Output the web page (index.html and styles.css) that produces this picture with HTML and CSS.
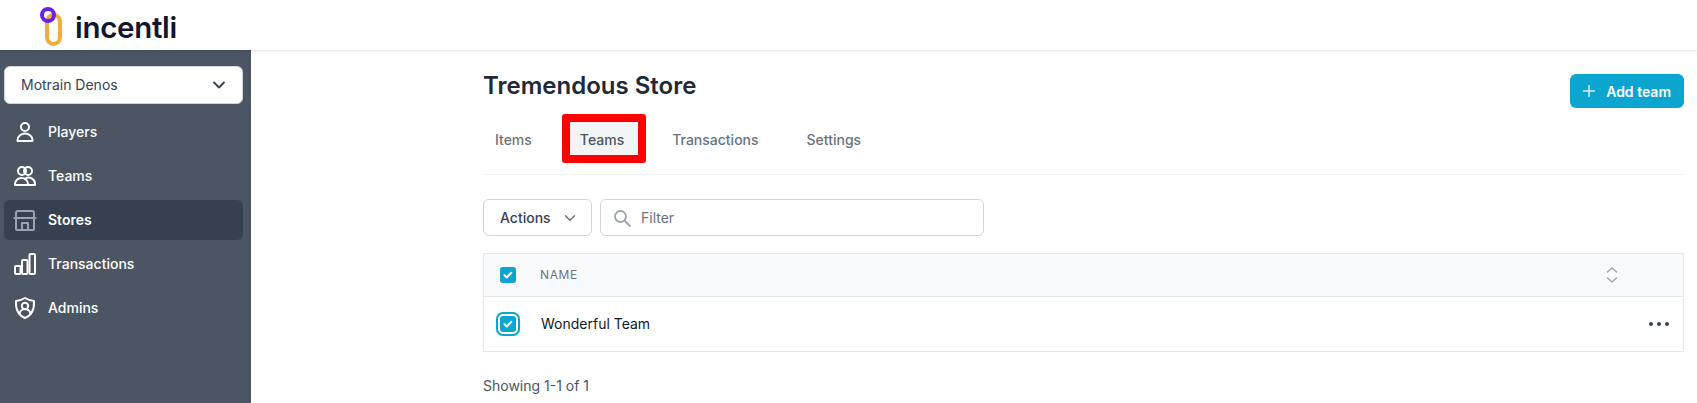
FILE: index.html
```html
<!DOCTYPE html>
<html lang="en">
<head>
  <meta charset="UTF-8" />
  <meta name="viewport" content="width=device-width, initial-scale=1.0"/>
  <title>Tremendous Store</title>
  <link rel="stylesheet" href="styles.css">
</head>
<body>
  <header class="topbar">
    <svg class="logo-mark" width="30" height="48" viewBox="0 0 30 48" fill="none">
      <rect x="7" y="14" width="13" height="29" rx="6.500" stroke="#f0ad3c" stroke-width="4"/>
      <circle cx="8" cy="14" r="6" stroke="#6a22e6" stroke-width="4"/>
    </svg>
    <span class="logo-text">incentli</span>
  </header>

  <div class="layout">
    <aside class="sidebar">
      <div class="org-select">
        <span>Motrain Denos</span>
        <svg width="20" height="20" viewBox="0 0 24 24" fill="none" stroke="#374151" stroke-width="2.200" stroke-linecap="round" stroke-linejoin="round"><path d="M6 9l6 6 6-6"/></svg>
      </div>
      <nav class="nav">
        <a class="nav-item">
          <svg width="24" height="24" viewBox="0 0 24 24" fill="none" stroke="currentColor" stroke-width="2" stroke-linecap="round" stroke-linejoin="round"><circle cx="12" cy="7" r="4"/><path d="M4.500 21v-1a7.500 6.500 0 0 1 15 0v1z"/></svg>
          <span>Players</span>
        </a>
        <a class="nav-item">
          <svg width="24" height="24" viewBox="0 0 24 24" fill="none" stroke="currentColor" stroke-width="2" stroke-linecap="round" stroke-linejoin="round"><circle cx="9" cy="7" r="4"/><circle cx="15" cy="7" r="4"/><path d="M2 21v-1a6.500 6 0 0 1 13 0v1z"/><path d="M12.500 14.300a6.500 6 0 0 1 9.500 5.700v1h-7"/></svg>
          <span>Teams</span>
        </a>
        <a class="nav-item active">
          <svg width="24" height="24" viewBox="0 0 24 24" fill="none" stroke="#9ca3af" stroke-width="2" stroke-linecap="round" stroke-linejoin="round"><path d="M3 10V5a2 2 0 0 1 2-2h14a2 2 0 0 1 2 2v5"/><path d="M1.500 10h21"/><path d="M3 10v11a1 1 0 0 0 1 1h16a1 1 0 0 0 1-1V10"/><path d="M9 22v-7h6v7"/></svg>
          <span>Stores</span>
        </a>
        <a class="nav-item">
          <svg width="24" height="24" viewBox="0 0 24 24" fill="none" stroke="currentColor" stroke-width="2" stroke-linecap="round" stroke-linejoin="round"><rect x="2" y="14" width="5.500" height="8" rx="1"/><rect x="9" y="8" width="5.500" height="14" rx="1"/><rect x="16.500" y="2" width="5.500" height="20" rx="1"/></svg>
          <span>Transactions</span>
        </a>
        <a class="nav-item">
          <svg width="24" height="24" viewBox="0 0 24 24" fill="none" stroke="currentColor" stroke-width="2" stroke-linecap="round" stroke-linejoin="round"><path d="M12 2c3 1.800 6 2.800 9 3 .5 8-2 14-9 17C5 19 2.500 13 3 5c3-.2 6-1.200 9-3z"/><circle cx="12" cy="10" r="3.200"/><path d="M6.500 18a5.500 5 0 0 1 11 0"/></svg>
          <span>Admins</span>
        </a>
      </nav>
    </aside>

    <main class="content">
      <div class="page-head">
        <h1>Tremendous Store</h1>
        <button class="btn-add">
          <svg width="16" height="16" viewBox="0 0 16 16" fill="none" stroke="#d8f1f8" stroke-width="1.500" stroke-linecap="round"><path d="M8 2.500v11M2.500 8h11"/></svg>
          Add team
        </button>
      </div>

      <div class="tabs">
        <a class="tab">Items</a>
        <a class="tab current">Teams</a>
        <a class="tab">Transactions</a>
        <a class="tab">Settings</a>
      </div>

      <div class="toolbar">
        <button class="btn-actions">
          Actions
          <svg width="18" height="18" viewBox="0 0 24 24" fill="none" stroke="#6b7280" stroke-width="2" stroke-linecap="round" stroke-linejoin="round"><path d="M6 9l6 6 6-6"/></svg>
        </button>
        <div class="filter">
          <svg width="20" height="20" viewBox="0 0 20 20" fill="none" stroke="#9ca3af" stroke-width="1.800" stroke-linecap="round"><circle cx="8.500" cy="8.500" r="5.500"/><path d="M12.700 12.700L18 18"/></svg>
          <span>Filter</span>
        </div>
      </div>

      <div class="table">
        <div class="table-head">
          <span class="check">
            <svg width="16" height="16" viewBox="0 0 16 16" fill="none" stroke="#fff" stroke-width="2" stroke-linecap="round" stroke-linejoin="round"><path d="M4.500 8.300l2.300 2.200 4.500-4.800"/></svg>
          </span>
          <span class="col-name">NAME</span>
          <svg class="sort" width="14" height="20" viewBox="0 0 14 20" fill="none" stroke="#9ca3af" stroke-width="1.300" stroke-linecap="round" stroke-linejoin="round"><path d="M2.500 7L7 3l4.500 4"/><path d="M2.500 13L7 17l4.500-4"/></svg>
        </div>
        <div class="table-row">
          <span class="check focused">
            <svg width="16" height="16" viewBox="0 0 16 16" fill="none" stroke="#fff" stroke-width="2" stroke-linecap="round" stroke-linejoin="round"><path d="M4.500 8.300l2.300 2.200 4.500-4.800"/></svg>
          </span>
          <span class="row-name">Wonderful Team</span>
          <span class="dots"><i></i><i></i><i></i></span>
        </div>
      </div>

      <p class="showing">Showing 1-1 of 1</p>
    </main>
  </div>
</body>
</html>
```

FILE: styles.css
```css
* {
  box-sizing: border-box;
}
body {
  margin: 0;
  height: 403px;
  overflow: hidden;
  background: #fff;
  color: #1f2937;
  font-family: Inter, "Liberation Sans", sans-serif;
  font-size: 14px;
}
.topbar {
  height: 50px;
  display: flex;
  align-items: center;
  padding-left: 40px;
  box-shadow: 0 1px 2px rgba(0, 0, 0, 0.12);
  position: relative;
}
.logo-mark {
  margin-right: 5px;
}
.logo-text {
  margin-top: 4px;
  font-size: 29.500px;
  font-weight: 600;
  letter-spacing: -0.3px;
  color: #111630;
}
.layout {
  display: flex;
  height: 353px;
}
.sidebar {
  width: 251px;
  flex-shrink: 0;
  background: #4b5563;
  padding: 16px 8px 0 4px;
}
.org-select {
  height: 38px;
  background: #fff;
  border: 1px solid #d1d5db;
  border-radius: 6px;
  display: flex;
  align-items: center;
  justify-content: space-between;
  padding: 0 13px 0 16px;
  color: #374151;
}
.org-select span {
  margin-bottom: 2px;
}
.nav {
  margin-top: 8px;
  display: flex;
  flex-direction: column;
  gap: 4px;
}
.nav-item {
  height: 40px;
  display: flex;
  align-items: center;
  gap: 11px;
  padding-left: 9px;
  border-radius: 6px;
  color: #fff;
  font-weight: 500;
}
.nav-item span {
  margin-bottom: 2px;
}
.nav-item.active {
  background: #374151;
  font-weight: 600;
}
.content {
  flex: 1;
  padding: 0 13px 0 232px;
}
.page-head {
  display: flex;
  justify-content: space-between;
  align-items: flex-start;
  padding-top: 20px;
}
h1 {
  margin: 0;
  font-size: 24px;
  line-height: 32px;
  font-weight: 600;
}
.btn-add {
  height: 34px;
  margin-top: 4px;
  padding: 0 13px 0 11px;
  display: flex;
  align-items: center;
  gap: 9px;
  border: none;
  border-radius: 6px;
  background: #0ba5d0;
  color: #fff;
  font-family: inherit;
  font-size: 14px;
  font-weight: 600;
}
.tabs {
  display: flex;
  gap: 24px;
  margin-top: 14px;
  padding-bottom: 19px;
  border-bottom: 1px solid #f3f4f6;
}
.tab {
  height: 33px;
  padding: 2px 12px 0;
  display: flex;
  align-items: center;
  color: #6b7280;
  font-weight: 500;
}
.tab.current {
  margin: 0 -2px 0 2px;
  padding: 2px 14px 0 10px;
  background: #f3f4f6;
  color: #4b5563;
  position: relative;
}
/* red highlight drawn over the tab */
.tab.current::after {
  content: "";
  position: absolute;
  inset: -8px;
  border: 8px solid #f00;
  border-radius: 3px;
}
.toolbar {
  display: flex;
  gap: 8px;
  margin-top: 24px;
}
.btn-actions {
  width: 109px;
  height: 37px;
  display: flex;
  align-items: center;
  gap: 10px;
  padding: 0 0 0 16px;
  background: #fff;
  border: 1px solid #d1d5db;
  border-radius: 6px;
  color: #374151;
  font-family: inherit;
  font-size: 14px;
  font-weight: 500;
}
.filter {
  width: 384px;
  height: 37px;
  display: flex;
  align-items: center;
  gap: 9px;
  padding-left: 11px;
  border: 1px solid #d1d5db;
  border-radius: 6px;
  color: #6b7280;
}
.table {
  margin-top: 17px;
  border: 1px solid #e5e7eb;
}
.table-head {
  height: 43px;
  display: flex;
  align-items: center;
  background: #f9fafb;
  border-bottom: 1px solid #e5e7eb;
  padding-left: 16px;
}
.table-row {
  height: 54px;
  display: flex;
  align-items: center;
  padding-left: 16px;
}
.check {
  width: 16px;
  height: 16px;
  border-radius: 3px;
  background: #0ba5d0;
  display: flex;
  flex-shrink: 0;
}
.check.focused {
  box-shadow: 0 0 0 2px #fff, 0 0 0 4px #0ba5d0;
}
.col-name {
  margin: 0 0 2px 24px;
  font-size: 12px;
  font-weight: 400;
  letter-spacing: 0.6px;
  color: #6b7280;
}
.row-name {
  margin: 0 0 2px 25px;
  color: #111827;
  font-weight: 400;
}
.sort {
  margin-left: auto;
  margin-right: 64px;
}
.dots {
  margin-left: auto;
  margin-right: 14px;
  display: flex;
  gap: 4px;
}
.dots i {
  width: 4px;
  height: 4px;
  border-radius: 50%;
  background: #374151;
}
.showing {
  margin: 24px 0 0;
  color: #4b5563;
  line-height: 20px;
}
```
